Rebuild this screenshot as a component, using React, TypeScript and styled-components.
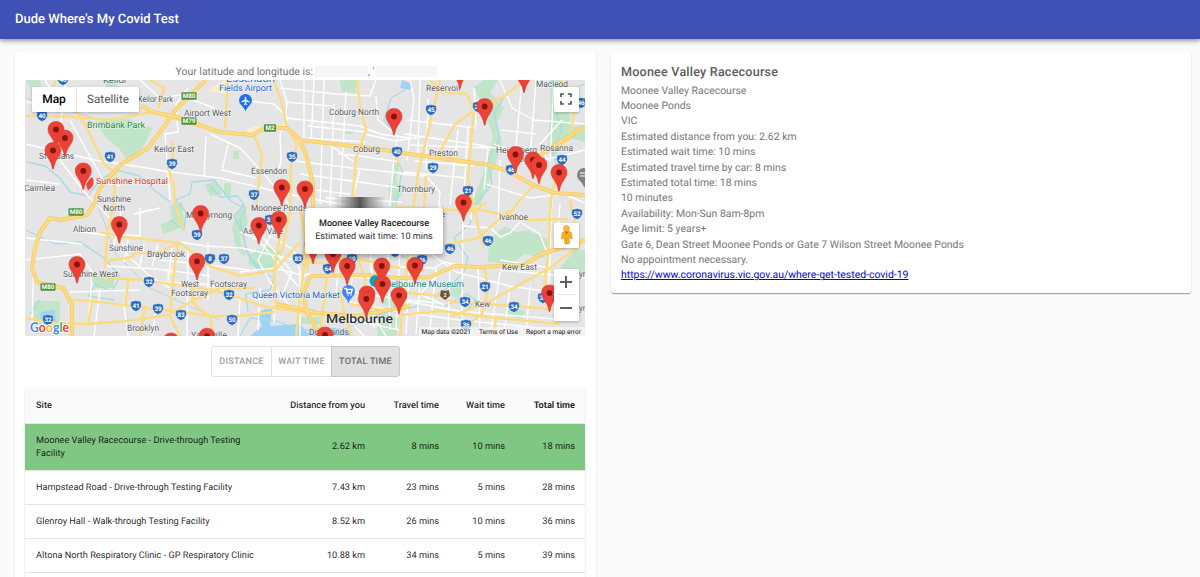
import React from "react";
import styled, { createGlobalStyle } from "styled-components";

const GlobalStyle = createGlobalStyle`
  * { box-sizing: border-box; }
  html, body { margin: 0; padding: 0; background: #fafafa; overflow: hidden; }
  body { font-family: Roboto, "Liberation Sans", sans-serif; font-size: 10.45px; color: rgba(0, 0, 0, 0.87); text-rendering: geometricPrecision; }
`;

const Page = styled.div`
  height: 577px;
  overflow: hidden;
`;

const AppBar = styled.header`
  position: relative;
  display: flex;
  align-items: center;
  height: 39px;
  padding: 0 15px 1px;
  background: #3f51b5;
  box-shadow: 0 1.5px 3px rgba(0, 0, 0, 0.2), 0 3px 4px rgba(0, 0, 0, 0.14), 0 1px 7px rgba(0, 0, 0, 0.12);
`;

const AppTitle = styled.h1`
  margin: 0;
  font-size: 13px;
  font-weight: 500;
  color: #fff;
`;

const Columns = styled.main`
  display: grid;
  grid-template-columns: 581px 580px;
  gap: 15px;
  align-items: start;
  padding: 13px 9px 0 15px;
`;

const Card = styled.section<{ $tall?: boolean }>`
  height: ${(p) => (p.$tall ? "620px" : "241px")};
  padding: ${(p) => (p.$tall ? "10px" : "13px 10px")};
  background: #fff;
  border-radius: 3px;
  box-shadow: 0 1.5px 1px -1px rgba(0, 0, 0, 0.2), 0 1px 1px rgba(0, 0, 0, 0.14), 0 1px 2px rgba(0, 0, 0, 0.12);
`;

const Position = styled.div`
  display: flex;
  justify-content: center;
  align-items: center;
  height: 18px;
  padding-left: 2px;
  color: #757575;
`;

const Redacted = styled.span<{ $w: number }>`
  width: ${(p) => p.$w}px;
  height: 11px;
  margin-left: 2px;
  background: #f6f6f6;
`;

const MapFrame = styled.div`
  position: relative;
  width: 560px;
  height: 256px;
  overflow: hidden;
  background: #e5e5e5;
  & > svg { display: block; }
`;

const MapControl = styled.div<{ $x: number; $y: number; $w: number; $h: number }>`
  position: absolute;
  left: ${(p) => p.$x}px;
  top: ${(p) => p.$y}px;
  width: ${(p) => p.$w}px;
  height: ${(p) => p.$h}px;
  display: flex;
  justify-content: center;
  align-items: center;
  background: #fff;
  border-radius: 1.5px;
  box-shadow: 0 1px 3px rgba(0, 0, 0, 0.25);
`;

const IconControl = styled(MapControl)`
  padding: 0 1px 1px 0;
`;

const ZoomControl = styled(MapControl)`
  flex-direction: column;
  justify-content: flex-start;
  padding: 7px 1px 0 0;
`;

const ZoomDivider = styled.div`
  width: 19px;
  height: 1px;
  margin: 6px 0 12px;
  background: #e6e6e6;
`;

const MapType = styled.div<{ $active?: boolean; $w: number }>`
  width: ${(p) => p.$w}px;
  height: 25px;
  line-height: 25px;
  text-align: center;
  font-size: ${(p) => (p.$active ? 12 : 11.7)}px;
  font-weight: ${(p) => (p.$active ? 500 : 400)};
  color: ${(p) => (p.$active ? "#000" : "#565656")};
  & + & { border-left: 1px solid #e6e6e6; }
`;

const HiddenLabel = styled.div`
  position: absolute;
  left: 309px;
  top: 117px;
  width: 52px;
  height: 12px;
  background: linear-gradient(90deg, #dedede00, #858585 35%, #555 50%, #999 68%, #d8d8d800);
`;

const InfoWindow = styled.div`
  position: absolute;
  left: 280px;
  top: 128px;
  width: 138px;
  height: 46px;
  padding-top: 10px;
  background: #fff;
  border-radius: 3px;
  box-shadow: 0 2px 5px 1px rgba(0, 0, 0, 0.3);
  text-align: center;
  line-height: 13px;
  color: #333;
  white-space: nowrap;
`;

const InfoTitle = styled.div`
  font-weight: 500;
  font-size: 9.1px;
  color: #222;
`;

const InfoText = styled.div`
  font-size: 9.15px;
`;

const Attribution = styled.div`
  position: absolute;
  right: 0;
  bottom: 0;
  display: flex;
  gap: 8px;
  height: 9px;
  padding: 0 4px 0 3px;
  line-height: 10px;
  font-size: 6.6px;
  background: rgba(245, 245, 245, 0.75);
  color: #111;
  white-space: nowrap;
`;

const ToggleRow = styled.div`
  display: flex;
  justify-content: center;
  padding: 10px 0 11px;
  margin-left: 1px;
`;

const Toggle = styled.button<{ $w: number; $selected?: boolean }>`
  width: ${(p) => p.$w}px;
  height: 31px;
  margin: 0 0 0 -1px;
  padding: 0;
  border: 1px solid ${(p) => (p.$selected ? "#c8c8c8" : "#e2e2e2")};
  background: ${(p) => (p.$selected ? "#e0e0e0" : "#fff")};
  color: ${(p) => (p.$selected ? "#6b6b6b" : "#a0a0a0")};
  font: 500 9px Roboto, "Liberation Sans", sans-serif;
  letter-spacing: 0.25px;
  text-rendering: inherit;
  &:first-child { border-radius: 3px 0 0 3px; }
  &:last-child { border-radius: 0 3px 3px 0; }
`;

const SiteTable = styled.table`
  width: 560px;
  border-collapse: separate;
  border-spacing: 0;
  table-layout: fixed;
  font-size: 9.2px;
  line-height: 13px;
  border-radius: 3px;
  box-shadow: 0 1px 1.5px rgba(0, 0, 0, 0.24), 0 0 1px rgba(0, 0, 0, 0.14);
`;

const Column = styled.col<{ $w: number }>`
  width: ${(p) => p.$w}px;
`;

const HeadCell = styled.th<{ $strong?: boolean }>`
  height: 36px;
  padding: 0 10px 1px 11px;
  border-bottom: 1px solid #e4e4e4;
  background: #fafafa;
  text-align: right;
  font-weight: ${(p) => (p.$strong ? 700 : 500)};
  white-space: nowrap;
  &:first-child { text-align: left; }
`;

const SiteRow = styled.tr<{ $best?: boolean }>`
  height: ${(p) => (p.$best ? 47 : 34)}px;
  background: ${(p) => (p.$best ? "#81c784" : "#fff")};
`;

const Cell = styled.td`
  padding: 0 10px 1px 11px;
  border-bottom: 1px solid #e4e4e4;
  text-align: right;
  &:first-child { text-align: left; }
`;

const SiteHeading = styled.h2`
  margin: 0 0 1.5px;
  font-size: 12.6px;
  font-weight: 500;
  line-height: 16px;
  letter-spacing: 0.2px;
  color: #5c5c5c;
`;

const Detail = styled.div`
  line-height: 15.4px;
  color: #757575;
`;

const DetailLink = styled.a`
  line-height: 15.4px;
  color: #0000ee;
`;

const greens = [
  "M110 118L130 119L143 126L152 128L147 140L140 152L127 160L119 148L106 138L96 123Z",
  "M34 301H60V328L34 323Z",
  "M340 80H356V93L342 92Z",
  "M250 254L267 246L282 252L276 266L262 272L248 264Z",
  "M237 213L245 206L248 222L240 238L246 258L236 248L232 228Z",
  "M489 240L505 226L516 232L528 230L548 240L544 258L524 254L512 264L488 262Z",
  "M474 87L484 80H498L490 92L504 108L496 124L502 144L494 168L480 206L472 204L488 160L493 136L484 110Z",
  "M392 151L400 164L396 180L402 194L392 208L388 186L395 174Z",
  "M550 80H562L572 128L585 122V142L568 138L552 150Z",
  "M575 250H585V276L560 268Z",
  "M550 112L560 132L556 160L548 152Z",
  "M26 80H40L44 96L32 92Z",
  "M170 206L182 202L184 226L164 234L160 224L172 220Z",
  "M90 276H114V288H96Z", "M104 80H116L120 94L108 92Z",
  "M205 185L216 180L222 194L210 196Z", "M345 130h8v4h-8z", "M233 151h6v8h-6z", "M224 183h7v12h-7z",
  "M386 290L402 292L396 308L382 304Z", "M376 312L400 318L396 336H378Z",
  "M452 282L464 288L458 298L450 296Z", "M300 317H322V324H302Z", "M509 305L526 312L520 320L508 314Z",
];
const waters = [
  "M250 336L262 326L258 314L264 309H272L270 326L300 324L310 336Z",
  "M41 312L55 310L56 323L40 322Z",
  "M302 336Q322 322 352 332L350 336Z",
  "M402 80L412 84L410 90L400 88Z",
];
const rivers = [
  "M26 162L45 166L60 178L70 192L88 196L100 180L116 170L140 176L154 190L170 202",
  "M26 230L55 244L80 242L104 258L120 276L112 292L96 284L88 296L114 300",
  "M170 220L184 230L186 212L176 200L190 194L192 182L214 180L232 202L246 208L240 220L244 240L250 258L262 270L276 264",
  "M210 186L220 197L238 196L244 205L234 216L244 236L246 252L260 272L274 278L270 290L246 294L248 312",
  "M405 90L391 98L384 120L398 138L394 154L402 170L396 206L404 226L396 246L404 258",
  "M585 84L566 90L556 112L562 130L552 150L558 170",
  "M500 80L506 94L494 114L500 138L488 160L492 184L474 206L470 224L454 238L468 258L464 272L450 286L430 300L446 306L466 294L476 300L460 318",
  "M30 314L40 300", "M108 80L116 94L100 110", "M240 336L250 318L276 321L300 330L340 331L380 314L420 306",
];
const minor = [
  "M60 80L74 96", "M26 102L88 112", "M26 144L94 160L160 170", "M60 160L86 194L112 220L128 256L150 276L170 288",
  "M70 120L104 182L120 186", "M26 260L80 254L92 272L90 302L88 325", "M34 250L32 323", "M140 80L160 98L180 95L214 108",
  "M170 200L165 134L178 132L176 104L188 88", "M155 170L220 178L270 190L306 198L400 214", "M210 134L240 148L264 174L290 206",
  "M180 242L206 246L242 248L304 262", "M140 208V236L106 234", "M80 232L116 236L112 252", "M120 208L122 236", "M134 214L160 208",
  "M82 244L26 238", "M128 240L124 262", "M144 244L140 266", "M158 245L152 266", "M172 248L168 280", "M106 266L158 269L210 276",
  "M188 250L187 336", "M208 242L208 300", "M150 281L200 284L250 288", "M160 260L216 266L250 270",
  "M270 236L258 260L270 282L290 306L318 313", "M270 236L294 250L300 272L300 336", "M240 272L274 268L306 276",
  "M262 236L292 272L280 300", "M240 232L258 240L298 286",
  "M280 80L287 102L286 118", "M240 100L274 104L288 118L280 134L281 160L278 174", "M285 102L332 106", "M304 80V140", "M314 80L311 142",
  "M324 80L320 204", "M334 104L330 206", "M346 92L340 206", "M280 88L336 94L370 96L376 80", "M286 118L360 126L380 134L410 138",
  "M287 160L352 168L410 174", "M300 174L360 182L400 188", "M338 154L360 156L400 162", "M308 126L366 132", "M308 138L365 142",
  "M360 170L350 208", "M376 96L378 120L398 136L394 156L390 206", "M364 134L396 141L426 136", "M326 142L354 162", "M314 190L350 194", "M326 198L402 202",
  "M410 80L414 98L407 160", "M407 120L476 128", "M404 134L486 146", "M410 145L488 148L484 190", "M415 161L474 166", "M420 80L418 154", "M428 99L426 170",
  "M404 172L466 178", "M458 130L450 205", "M468 128L464 192", "M474 88L476 126", "M500 80L512 108L534 120L585 124", "M522 80L516 146",
  "M536 80L530 160", "M554 80L550 162", "M562 120L540 144L548 160", "M502 130L536 134", "M494 144L536 162L585 150",
  "M480 146L515 150L520 178", "M500 160L498 224", "M486 184L530 198L564 194L585 203", "M440 205L443 234", "M463 206L462 320",
  "M464 226L491 228L500 237L510 233L520 222L540 234L548 256", "M474 192L471 220", "M552 196L548 304",
  "M400 174L426 176L440 192L438 216", "M400 244L430 253L456 272L510 286L550 292", "M400 267L434 268L445 262L470 268", "M410 254L406 334", "M422 256L416 334",
  "M436 268L430 330", "M450 264L448 336", "M478 268L480 334", "M500 272L490 336", "M510 286L504 334", "M530 286L526 334",
  "M340 256L336 292", "M354 256L350 300", "M370 240L374 328", "M388 250L390 330", "M400 244L396 330", "M305 274L400 280", "M340 290L398 299L440 303",
  "M350 302L400 312L460 320L560 330", "M352 320L400 330", "M342 312L364 336", "M366 304L386 336",
  "M400 300L458 311L566 320", "M500 270L585 278", "M500 260L550 268", "M560 204L556 250", "M440 272L420 294L444 305",
  "M206 136L204 176", "M228 145L222 170L256 178", "M26 180L60 184", "M45 80L60 104", "M62 112L56 162", "M210 284L240 300L238 336",
  "M70 292L140 290", "M100 290L94 336", "M124 306L128 336", "M156 310L152 336", "M260 288L258 330", "M276 290L274 322",
];
const yellow = [
  "M26 116L74 117L110 120L152 112L180 120L220 133",
  "M68 96L88 130L104 164L116 174L113 206L107 238L105 268", "M42 115L56 80", "M165 86L158 108", "M142 108L122 110",
  "M172 142L173 158L168 168L174 186L175 204L183 230",
  "M100 232L118 236L152 240L180 243L210 266L240 276L275 270L300 242",
  "M106 261L132 257L134 253L158 253L178 243", "M150 80L164 88", "M104 278L140 280L180 285L218 291L262 306L320 315",
  "M72 300L92 301L130 306L180 312L210 316L240 316L275 312", "M128 280L126 304", "M178 243L173 280L170 316", "M92 302L88 324L126 321L168 315L194 300L220 288L254 288",
  "M26 318L54 323L88 324", "M145 306L140 336", "M192 284L193 303L211 318L212 336", "M170 316L180 336",
  "M228 80L225 128", "M273 80L281 99L287 128L297 144L291 166L290 212L282 252",
  "M254 134L262 155L256 205", "M357 80L360 106L366 130L356 158L352 206",
  "M440 80L434 106L427 136L418 174L410 235L400 336", "M430 80L442 92L467 94L474 110L472 132L468 178L478 226L484 248",
  "M438 155L455 124L475 110L502 98L522 82", "M400 154L450 158L502 168", "M426 176L424 206",
  "M533 186L520 200L508 216", "M560 154L551 200L548 256L542 302", "M560 80L577 94L570 138L556 150",
  "M400 164L395 156", "M395 207L475 211L486 202", "M470 208L530 220L568 219",
  "M484 265L488 290L482 314L460 330", "M450 317L488 302L550 268L580 245L570 200", "M400 292L440 296L452 302L488 304L550 309",
  "M398 315L440 311L488 317L560 324", "M330 250L326 284L320 334", "M308 262L332 264L348 257L400 268",
  "M300 208L309 258L307 272", "M304 266L300 300L296 336", "M340 290L344 312L352 336", "M336 244L382 240L400 247",
  "M400 252L430 248L478 238L510 210", "M340 235L355 252L365 278L364 308", "M284 212L274 270L276 310", "M350 304L382 310L400 309", "M496 316L494 336",
];
const motorway = [
  "M206 80L177 108L163 128L148 148L120 165L100 188L95 202L87 215L60 220L50 218L40 232L35 248L32 268L37 282L63 288L72 305L72 336",
  "M142 106L153 112L177 117L220 132L252 135L265 128H287L300 140L307 158L313 185V210L306 240L304 266",
  "M300 140L370 148L410 154L490 165L510 172L533 185L555 193L585 195",
  "M533 160L558 143L585 127",
  "M585 240L560 248L541 254L524 265L478 267L455 266L430 277L398 278L364 275L310 276",
  "M310 276L304 292L306 310L320 336", "M276 304L318 313L356 316L410 306",
];

const labels: [string, number, number, number, string?, number?][] = [
  ["Keilor", 103, 83, 24], ["Keilor Park", 138, 102, 35], ["Airport West", 184, 116, 47], ["Keilor East", 154, 152, 40],
  ["Brimbank Park", 87, 128, 58, "#188038"], ["St Albans", 39, 159, 35], ["Cairnlea", 24, 191, 31],
  ["Sunshine Hospital", 96, 184, 72, "#d93025"], ["Sunshine", 97, 202, 34], ["North", 103, 211, 22],
  ["Albion", 73, 232, 23], ["Sunshine", 109, 251, 34], ["Sunshine West", 63, 277, 55], ["Braybrook", 147, 257, 38],
  ["West", 181, 287, 18], ["Footscray", 171, 296, 37], ["Footscray", 210, 287, 37], ["Brooklyn", 127, 331, 32],
  ["Yarraville", 191, 338, 36], ["Maribyrnong", 186, 218, 46], ["Ascot Vale", 243, 234, 40], ["Essendon", 251, 174, 36],
  ["Moonee Ponds", 251, 211, 56], ["Coburg North", 329, 115, 50], ["Coburg", 353, 152, 27], ["Essendon", 226, 82, 49, "#1967d2"],
  ["Fields Airport", 219, 91, 53, "#1967d2"], ["Reservoir", 426, 91, 35], ["Macleod", 536, 87, 32], ["Preston", 429, 156, 29],
  ["Heidelberg", 496, 153, 41], ["Heights", 514, 162, 23], ["Rosanna", 540, 151, 33], ["Thornbury", 397, 192, 38],
  ["Northcote", 407, 217, 38], ["Ivanhoe", 499, 220, 29], ["Kew East", 502, 270, 35], ["Kew", 475, 307, 15],
  ["Melbourne Museum", 383, 287, 81, "#12838b"], ["Queen Victoria Market", 252, 298, 88, "#1967d2"],
  ["Docklands", 309, 335, 40], ["Balwyn", 562, 277, 25], ["Balwyn", 562, 311, 25],
  ["Melbourne", 326, 323, 67, "#303134", 12.5],
];
const shields: [number, number, string][] = [
  [63, 80, "40"], [42, 116, "40"], [110, 157, "41"], [172, 164, "39"], [292, 157, "35"], [254, 195, "37"], [397, 152, "40"], [431, 110, "45"],
  [433, 168, "29"], [478, 107, "27"], [511, 170, "46"], [562, 160, "44"], [468, 191, "21"], [577, 214, "52"], [488, 241, "46"], [450, 249, "46"],
  [485, 287, "21"], [465, 302, "34"], [514, 307, "34"], [466, 325, "36"], [197, 235, "39"], [210, 259, "8"], [224, 259, "37"], [298, 259, "83"],
  [328, 269, "64"], [352, 259, "60"], [395, 252, "46"], [149, 282, "32"], [229, 295, "32"], [232, 320, "50"], [136, 306, "41"], [158, 309, "39"],
  [181, 315, "83"], [48, 320, "32"], [581, 103, "46"], [543, 298, "36"], [270, 220, "35"], [422, 260, "46"],
];
const motorwayBadges: [number, number, string][] = [[189, 96, "M80"], [189, 121, "M79"], [270, 128, "M2"], [76, 212, "M80"], [48, 287, "M80"]];
const pins: [number, number][] = [
  [460, 62], [524, 66], [484.7, 98.5], [394, 108.5], [56, 121.5], [65, 130], [53, 142.5], [515.5, 146.5], [533, 152], [539, 157],
  [83.3, 163], [559, 164.5], [281.8, 179.5], [305, 181], [463.5, 194.5], [200.6, 205.5], [278.7, 211.5], [119.3, 216.5], [258.8, 217.5],
  [313, 237], [333, 246], [197, 253.3], [77, 256.5], [415, 257.5], [347.2, 258], [381.8, 258], [382.5, 276],
  [549.5, 285], [367, 286], [399, 287.3], [366.3, 291], [207, 328.2], [325, 327], [171, 333],
];

function Pin({ x, y }: { x: number; y: number }) {
  return (
    <g transform={`translate(${x} ${y})`}>
      <path d="M0 0C-4.8 0-8 3.5-8 7.8C-8 14-1.7 17-.7 25.5C-.5 27.2.5 27.2.7 25.5C1.7 17 8 14 8 7.8C8 3.5 4.8 0 0 0Z" fill="#ea4335" stroke="#d3322a" strokeWidth=".5" />
      <circle cy="8" r="2.9" fill="#811411" />
    </g>
  );
}

function CityMap() {
  return (
    <svg width="560" height="256" viewBox="25 80 560 256" fontFamily="Roboto, 'Liberation Sans', sans-serif">
      <rect x="25" y="80" width="560" height="256" fill="#e5e5e5" />
      <g fill="#c0e5c8">{greens.map((d, i) => <path key={i} d={d} />)}</g>
      <path d="M514 171h8v14h-8zM80 182h13v14H80zM216 265h9v6h-9z" fill="#fbdcdc" />
      <path d="M247 129l13-4-2 8-11 2zM166 270l6-2 1 6-6 1zM206 91l20-11h5l-3 14z" fill="#fcefc9" />
      <g fill="#9fd3f5">{waters.map((d, i) => <path key={i} d={d} />)}</g>
      <g fill="none" stroke="#a8dae6" strokeWidth="1.3" strokeLinejoin="round">{rivers.map((d, i) => <path key={i} d={d} />)}</g>
      <path d="M96 200L116 254L150 288L220 320M26 98L100 120" fill="none" stroke="#cbcdd2" />
      <g fill="none" stroke="#fff" strokeWidth="1.4" strokeLinejoin="round">{minor.map((d, i) => <path key={i} d={d} />)}</g>
      <g fill="none" stroke="#fbdc82" strokeWidth="2.5" strokeLinejoin="round">{yellow.map((d, i) => <path key={i} d={d} />)}</g>
      <g fill="none" stroke="#f5cb60" strokeWidth="4" strokeLinejoin="round">{motorway.map((d, i) => <path key={i} d={d} />)}</g>
      <g fill="none" stroke="#fddb85" strokeWidth="2.6" strokeLinejoin="round">{motorway.map((d, i) => <path key={i} d={d} />)}</g>
      {shields.map(([x, y, n], i) => (
        <g key={i} transform={`translate(${x} ${y})`}>
          <path d="M-5-4.500L-2-5L0-5.500L2-5L5-4.500L5.500 0L3.300 3.800L0 5.500L-3.300 3.800L-5.500 0Z" fill="#2a6abf" stroke="#fff" strokeWidth=".4" />
          <text y="2.3" textAnchor="middle" fontSize="6.3" fontWeight="700" fill="#fff">{n}</text>
        </g>
      ))}
      {motorwayBadges.map(([x, y, n], i) => (
        <g key={i}>
          <rect x={x - (n === "M2" ? 6 : 7.5)} y={y - 3.7} width={n === "M2" ? 12 : 15} height="7.4" rx="1" fill="#4d9138" />
          <text x={x} y={y + 2.3} textAnchor="middle" fontSize="6.3" fontWeight="700" fill="#fff">{n}</text>
        </g>
      ))}
      <g>
        <path d="M245.5 94a6.4 6.4 0 0 0-6.4 6.4c0 4.6 5 5.6 6.4 11.2c1.4-5.6 6.4-6.6 6.4-11.2a6.4 6.4 0 0 0-6.4-6.4z" fill="#1a73e8" />
        <path d="M245.5 96.500l.7.8v2.200l3.300 2v1l-3.300-1v2l1 .8v.7l-1.700-.5l-1.700.5v-.7l1-.8v-2l-3.300 1v-1l3.300-2v-2.200z" fill="#fff" />
        <path d="M348.5 285a6.4 6.4 0 0 0-6.4 6.4c0 5 5 6 6.4 12c1.4-6 6.4-7 6.4-12a6.4 6.4 0 0 0-6.4-6.4z" fill="#4285f4" />
        <path d="M344.8 288.500h1.500l1 4.500h4l1-3.500h-5.500M348 295h.1M351 295h.1" fill="none" stroke="#fff" strokeWidth="1.3" strokeLinecap="round" />
        <circle cx="375.5" cy="281" r="6" fill="#12a4b4" />
        <path d="M86 184c5-9 8-9 8-1c-1 5-5 7-6 8" fill="#e9473c" stroke="#fff" strokeWidth=".7" />
        <path d="M584 168a7 7 0 0 0-7 7c0 5 5 6 7 12z M584 168h2v19h-2z" fill="#7a8288" />
        <path d="M580 173h5M580 176h5" stroke="#fff" />
        <path d="M441 290l4 1 4-1 1 6-5 4-5-4z" fill="#6b5540" />
        <text x="445" y="297" textAnchor="middle" fontSize="5.5" fontWeight="700" fill="#fff">2</text>
      </g>
      {labels.map(([t, x, y, w, color, size], i) => (
        <text key={i} x={x} y={y} textLength={w} lengthAdjust="spacingAndGlyphs" fontSize={size ?? 8.8} fontWeight={size ? 500 : 400}
          fill={color ?? "#55585c"} stroke="#fff" strokeOpacity=".7" strokeWidth="1.2" paintOrder="stroke">{t}</text>
      ))}
      {pins.map(([x, y], i) => <Pin key={i} x={x} y={y} />)}
      <text x="30" y="332" fontSize="13.5" textLength="39" lengthAdjust="spacingAndGlyphs" stroke="#fff" strokeWidth="1.8" paintOrder="stroke" fontFamily="Lato, sans-serif" fontWeight="700">
        <tspan fill="#4285f4">G</tspan><tspan fill="#ea4335">o</tspan><tspan fill="#fbbc04">o</tspan><tspan fill="#4285f4">g</tspan><tspan fill="#34a853">l</tspan><tspan fill="#ea4335">e</tspan>
      </text>
    </svg>
  );
}

const sites = [
  ["Moonee Valley Racecourse - Drive-through Testing Facility", "2.62 km", "8 mins", "10 mins", "18 mins"],
  ["Hampstead Road - Drive-through Testing Facility", "7.43 km", "23 mins", "5 mins", "28 mins"],
  ["Glenroy Hall - Walk-through Testing Facility", "8.52 km", "26 mins", "10 mins", "36 mins"],
  ["Altona North Respiratory Clinic - GP Respiratory Clinic", "10.88 km", "34 mins", "5 mins", "39 mins"],
  ["", "", "", "", ""],
];
const details = [
  "Moonee Valley Racecourse", "Moonee Ponds", "VIC", "Estimated distance from you: 2.62 km", "Estimated wait time: 10 mins",
  "Estimated travel time by car: 8 mins", "Estimated total time: 18 mins", "10 minutes", "Availability: Mon-Sun 8am-8pm",
  "Age limit: 5 years+", "Gate 6, Dean Street Moonee Ponds or Gate 7 Wilson Street Moonee Ponds", "No appointment necessary.",
];

export default function App() {
  return (
    <Page>
      <GlobalStyle />
      <AppBar><AppTitle>Dude Where's My Covid Test</AppTitle></AppBar>
      <Columns>
        <Card $tall>
          <Position>
            Your latitude and longitude is: <Redacted $w={53} />, '<Redacted $w={61} />
          </Position>
          <MapFrame>
            <CityMap />
            <MapControl $x={7} $y={7} $w={107} $h={25}>
              <MapType $active $w={44}>Map</MapType>
              <MapType $w={63}>Satellite</MapType>
            </MapControl>
            <IconControl $x={529} $y={7} $w={25} $h={25}>
              <svg width="12" height="12" viewBox="0 0 12 12" fill="none" stroke="#555" strokeWidth="1.7">
                <path d="M1 4V1H4M8 1H11V4M11 8V11H8M4 11H1V8" />
              </svg>
            </IconControl>
            <IconControl $x={529} $y={143} $w={25} $h={25}>
              <svg width="13" height="20" viewBox="0 0 13 20">
                <path d="M4 6.500h5l2.500 1 .8 6-1.600.5-1-4-.5 9H4.800l-.9-9-1 4-1.600-.5.8-6z" fill="#f5b324" stroke="#d98a15" strokeWidth=".5" />
                <circle cx="6.5" cy="3.6" r="3" fill="#fbbc2c" stroke="#d98a15" strokeWidth=".5" />
                <path d="M4.500 6.800L6.500 9.500L8.500 6.800" fill="#d95b22" />
                <path d="M6.500 12.500V19" stroke="#d98a15" strokeWidth=".7" />
              </svg>
            </IconControl>
            <ZoomControl $x={529} $y={189} $w={25} $h={52}>
              <svg width="12" height="12" viewBox="0 0 12 12" stroke="#606060" strokeWidth="2"><path d="M0 6H12M6 0V12" /></svg>
              <ZoomDivider />
              <svg width="12" height="2" viewBox="0 0 12 2" fill="#606060"><path d="M0 0H12V2H0Z" /></svg>
            </ZoomControl>
            <HiddenLabel />
            <InfoWindow>
              <InfoTitle>Moonee Valley Racecourse</InfoTitle>
              <InfoText>Estimated wait time: 10 mins</InfoText>
            </InfoWindow>
            <Attribution><span>Map data ©2021</span><span>Terms of Use</span><span>Report a map error</span></Attribution>
          </MapFrame>
          <ToggleRow>
            <Toggle $w={61}>DISTANCE</Toggle>
            <Toggle $w={61}>WAIT TIME</Toggle>
            <Toggle $w={69} $selected>TOTAL TIME</Toggle>
          </ToggleRow>
          <SiteTable>
            <colgroup>{[245, 105, 74, 66, 70].map((w, i) => <Column key={i} $w={w} />)}</colgroup>
            <thead>
              <tr>
                <HeadCell>Site</HeadCell>
                <HeadCell>Distance from you</HeadCell>
                <HeadCell>Travel time</HeadCell>
                <HeadCell>Wait time</HeadCell>
                <HeadCell $strong>Total time</HeadCell>
              </tr>
            </thead>
            <tbody>
              {sites.map((row, i) => (
                <SiteRow key={i} $best={i === 0}>{row.map((c, j) => <Cell key={j}>{c}</Cell>)}</SiteRow>
              ))}
            </tbody>
          </SiteTable>
        </Card>
        <Card>
          <SiteHeading>Moonee Valley Racecourse</SiteHeading>
          {details.map((d) => <Detail key={d}>{d}</Detail>)}
          <DetailLink href="#">https://www.coronavirus.vic.gov.au/where-get-tested-covid-19</DetailLink>
        </Card>
      </Columns>
    </Page>
  );
}
